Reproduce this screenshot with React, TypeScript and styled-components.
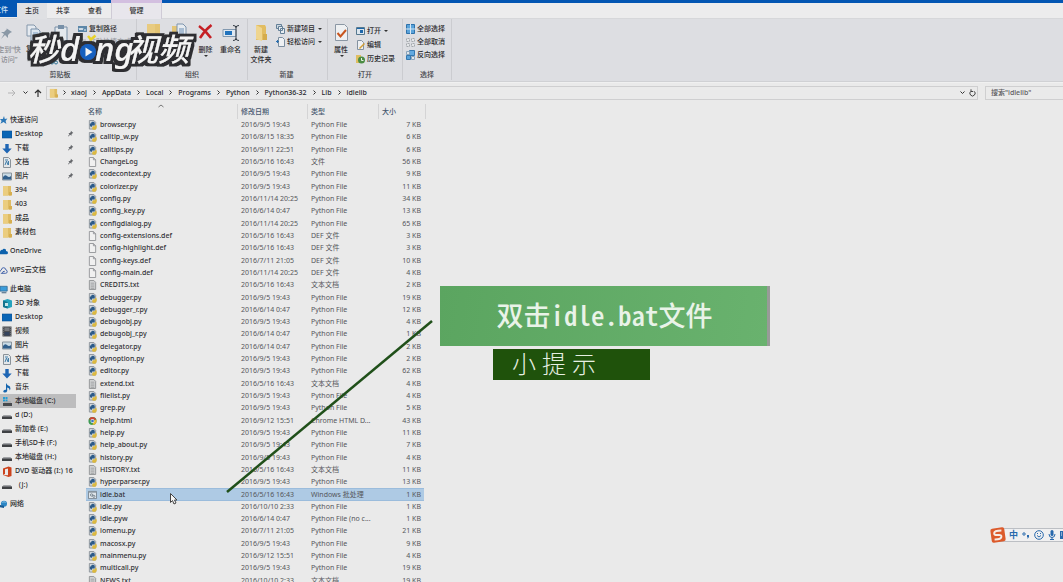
import React from 'react';
import styled, { createGlobalStyle, css } from 'styled-components';

const Global = createGlobalStyle`
  * { box-sizing: border-box; }
  html, body { margin: 0; height: 100%; overflow: hidden; }
  body {
    background: #eaeaea;
    color: #2c2c2e;
    font: 500 7px/12px "Noto Sans", "Noto Sans CJK SC", sans-serif;
  }
  button, input { font: inherit; color: inherit; border: 0; background: none; padding: 0; margin: 0; }
  svg { display: block; flex: none; }
`;

const Window = styled.div`
  position: relative;
  display: flex;
  flex-direction: column;
  height: 100vh;
  overflow: hidden;
`;

/* ---------- title strip and tabs ---------- */
const TitleStrip = styled.div`
  height: 3px;
  flex: none;
  background: #0356b3;
  padding-left: 111px;
`;
const ContextStrip = styled.div`
  width: 51px;
  height: 3px;
  background: #d3bfe0;
`;
const Tabs = styled.nav`
  display: flex;
  height: 16px;
  flex: none;
  background: #ececed;
  border-bottom: 1px solid #d6d7da;
`;
const Tab = styled.button<{ $kind?: 'file' | 'active' | 'context'; $w: number }>`
  width: ${p => p.$w}px;
  height: 16px;
  flex: none;
  text-align: center;
  white-space: nowrap;
  ${p => p.$kind === 'file' && css`
    display: flex;
    justify-content: flex-end;
    align-items: center;
    height: 14px;
    padding-right: 9px;
    background: #0356b3;
    color: #d5e4f5;
  `}
  ${p => p.$kind === 'active' && css`background: #dfe0e3;`}
  ${p => p.$kind === 'context' && css`background: #e8e6ec; border: solid #cfcbd6; border-width: 0 1px;`}
`;

/* ---------- ribbon ---------- */
const Ribbon = styled.div`
  display: flex;
  height: 63px;
  flex: none;
  background: #dddee2;
  border-bottom: 1px solid #d0d1d4;
`;
const Group = styled.section<{ $w: number }>`
  display: flex;
  flex-direction: column;
  justify-content: space-between;
  width: ${p => p.$w}px;
  flex: none;
  margin-bottom: 1px;
  border-right: 1px solid #cbccd0;
`;
const GroupBody = styled.div<{ $pad?: number }>`
  display: flex;
  align-items: flex-start;
  padding: 4px 0 0 ${p => p.$pad ?? 0}px;
`;
const GroupName = styled.div<{ $shift?: number }>`
  text-align: center;
  height: 10px;
  line-height: 10px;
  padding-right: ${p => p.$shift ?? 0}px;
  color: #45464a;
`;
const BigButton = styled.button<{ $w: number; $dim?: boolean }>`
  display: flex;
  flex-direction: column;
  align-items: center;
  width: ${p => p.$w}px;
  flex: none;
  line-height: 10px;
  white-space: nowrap;
  color: ${p => (p.$dim ? '#8d8f94' : 'inherit')};
  svg { margin-bottom: 2px; }
`;
const Stack = styled.div<{ $gap: number; $pad?: number; $top?: number }>`
  display: flex;
  flex-direction: column;
  gap: ${p => p.$gap}px;
  padding: ${p => p.$top ?? 0}px 0 0 ${p => p.$pad ?? 0}px;
`;
const SmallButton = styled.button<{ $dim?: boolean }>`
  display: flex;
  align-items: center;
  gap: 2px;
  height: 12px;
  white-space: nowrap;
  color: ${p => (p.$dim ? '#9b9da2' : 'inherit')};
`;
const Drop = styled.i`
  border: 2px solid transparent;
  border-top-color: #333;
  border-bottom: 0;
  margin-left: 1px;
`;

/* ---------- address row ---------- */
const AddressRow = styled.div`
  display: flex;
  align-items: center;
  flex: none;
  gap: 7px;
  height: 22px;
  padding-bottom: 2px;
  border-top: 1px solid #f0f0f0;
`;
const NavArrows = styled.div`
  display: flex;
  align-items: center;
  justify-content: space-between;
  width: 42px;
  padding-left: 8px;
  margin-right: -3px;
  button { display: flex; }
`;
const AddressBox = styled.div`
  display: flex;
  align-items: center;
  flex: 1;
  height: 14px;
  border: 1px solid #cfcfd0;
  padding-left: 2px;
`;
const Crumb = styled.a`
  color: #26262a;
  text-decoration: none;
`;
const Chevron = styled.span`
  display: flex;
  justify-content: center;
  width: 15px;
  &:nth-of-type(1) { width: 13px; }
`;
const Spacer = styled.div`flex: 1;`;
const Refresh = styled.button`
  display: flex;
  align-items: center;
  justify-content: center;
  width: 10px;
  height: 12px;
`;
const Search = styled.input`
  width: 78px;
  height: 14px;
  border: 1px solid #cfcfd0;
  border-right: 0;
  padding-left: 5px;
  &::placeholder { color: #5b5b5e; opacity: 1; }
`;

/* ---------- body ---------- */
const Body = styled.div`
  display: flex;
  flex: 1;
  min-height: 0;
`;
const Sidebar = styled.aside`
  width: 76px;
  flex: none;
  padding-top: 9px;
  overflow: hidden;
`;
const SideGroup = styled.div`margin-bottom: 5px;`;
const SideItem = styled.a<{ $root?: boolean; $on?: boolean }>`
  display: flex;
  align-items: center;
  gap: ${p => (p.$root ? 2 : 3)}px;
  height: 14px;
  padding: 0 2px 0 ${p => (p.$root ? 0 : 2)}px;
  color: inherit;
  text-decoration: none;
  white-space: nowrap;
  background: ${p => (p.$on ? '#bdbdbe' : 'transparent')};
`;
const Label = styled.span`flex: 1;`;

const Files = styled.main`
  flex: 1;
  padding-left: 10px;
  overflow: hidden;
`;
const Table = styled.table`
  width: 340px;
  height: 483px;
  table-layout: fixed;
  border-collapse: separate;
  border-spacing: 0;
  td, th { padding: 0; white-space: nowrap; overflow: hidden; text-align: left; }
  td { font-weight: 400; color: #55565a; padding-left: 3px; }
  td:first-child { font-weight: 500; color: #303034; padding-left: 2px; }
  td:last-child { text-align: right; padding-right: 5px; }
`;
const Head = styled.th`
  position: relative;
  height: 15px;
  font-weight: 500;
  color: #47586f;
  border-right: 1px solid #d4d4d5;
  && { padding-left: 3px; }
  &&:first-child { padding-left: 2px; }
`;
const SortMark = styled.svg`
  position: absolute;
  top: 0;
  left: 72px;
`;
const Row = styled.tr<{ $on?: boolean }>`
  height: 12px;
  line-height: 12px;
  ${p => p.$on && css`
    td { background: #aecae4; box-shadow: inset 0 1px #9bbcdc, inset 0 -1px #9bbcdc; }
    td:last-child { border-right: 2px solid #eaeaea; padding-right: 3px; }
  `}
`;
const NameCell = styled.span`
  display: flex;
  align-items: center;
  gap: 3px;
  height: 12px;
`;

/* ---------- things lying over the window ---------- */
const Overlay = styled.svg`
  position: absolute;
  top: 0;
  left: 0;
  pointer-events: none;
`;
const Callout = styled.div`
  position: absolute;
  left: 440px;
  top: 286px;
  width: 330px;
  height: 60px;
  padding-left: 2px;
  text-align: center;
  background: linear-gradient(100deg, #5ba560, #69b26e);
  border-right: 3px solid #989b98;
  color: #e9f3e8;
  font: 500 27px/58px "Noto Sans CJK SC", sans-serif;
  font-feature-settings: "hwid";
`;
const Tip = styled.div`
  position: absolute;
  left: 493px;
  top: 349px;
  width: 157px;
  height: 31px;
  padding-left: 19px;
  background: #1f520b;
  color: #e6efe2;
  font: 300 24px/33px "Liberation Serif", "Noto Sans CJK SC", serif;
`;
const ImeBar = styled.div`
  position: absolute;
  right: 0;
  top: 528px;
  display: flex;
  align-items: center;
  width: 65px;
  height: 14px;
  gap: 4px;
  padding-left: 11px;
  background: #f0f0f1;
  border: solid #bcbfc4;
  border-width: 1px 0;
  color: #2869ad;
  font-weight: 700;
  font-size: 9px;
`;
const ImeLogo = styled.svg`
  position: absolute;
  left: -9px;
  top: -3px;
`;

/* ---------- icons ---------- */
type IconName =
  | 'py' | 'file' | 'txt' | 'chrome' | 'bat' | 'folder' | 'star' | 'desktop' | 'down' | 'doc' | 'pic'
  | 'cloud' | 'wps' | 'pc' | 'cube' | 'video' | 'music' | 'sysdrive' | 'drive' | 'office' | 'net' | 'pin';

const shapes: Record<IconName, React.ReactNode> = {
  py: <><path d="M1.500 .5h5l2 2v7.500h-7z" fill="#cfd5da" stroke="#8b9298" /><path d="M3.500 3.500q0-1.500 2-1.500t2 1.500v2.500h-3v1.500h-1.500q-1-1-1-2.500t1.500-1.500z" fill="#2c5a88" /><path d="M5.500 7h2.500V5q1.800 0 1.800 2.500T8.500 10v.7H6q-1.500 0-1.500-1.500z" fill="#dcb93f" /></>,
  file: <path d="M1.500 .5h4.500l2.500 2.500v7.500h-7z M6 .5v2.500h2.500" fill="#f0f0f0" stroke="#929497" />,
  txt: <><path d="M1.500 .5h5l2 2v8h-7z" fill="#d0d2d3" stroke="#909294" /><path d="M3 3.500h4M3 5.500h4M3 7.500h4M3 9.300h4" stroke="#8b8e91" strokeWidth=".7" /></>,
  chrome: <><circle cx="5" cy="5.500" r="4.500" fill="#3d9a52" /><path d="M1 3.500A4.500 4.500 0 0 1 9.200 3.700L5 5z" fill="#cf4436" /><path d="M9.200 3.700A4.500 4.500 0 0 1 5 10L6 5.500z" fill="#e9bd32" /><circle cx="5" cy="5.500" r="2.200" fill="#e9eef4" /><circle cx="5" cy="5.500" r="1.500" fill="#3a75c4" /></>,
  bat: <><path d="M.5 1.500h9v8h-9z" fill="#dfe5ea" stroke="#75818c" /><path d="M1 2.500h8" stroke="#8e9aa5" /><circle cx="4" cy="5.500" r="1.300" fill="none" stroke="#73808b" /><circle cx="6.500" cy="7" r="1.200" fill="none" stroke="#73808b" /></>,
  folder: <><path d="M1 1h8v9.500H1z" fill="#dfbc63" /><path d="M1 1h5v9.500H1z" fill="#ebcd7f" /><path d="M7 7h3v3.500H7z" fill="#d6ae50" /></>,
  star: <path d="M5 0l1 3.500 3.200-.5-2.200 3L8 10 4.500 7.500.5 9.500 2 6 0 3.500h3.500z" fill="#2c78b8" />,
  desktop: <path d="M0 2h10v7H0z" fill="#0a65b5" stroke="#0a4f92" strokeWidth=".6" />,
  down: <path d="M3.300 1h3.400v4.500h3L5 10.500.3 5.500h3z" fill="#1f66b4" />,
  doc: <><path d="M1.500 .5h5l2 2v8h-7z" fill="#e3e7ea" stroke="#8a9299" /><path d="M3 8l1.500-4L6 8M3 3h3M6.500 4v4" stroke="#4480ab" fill="none" /></>,
  pic: <><path d="M.5 2h9v7h-9z" fill="#c9dae5" stroke="#88939c" /><path d="M1 6q2-3 4-1t4 0v3.500H1z" fill="#315f8c" /></>,
  cloud: <path d="M0 9V5.500Q1 3 3 3.500 4 1 6.500 2.500 8 3 7.500 5q2.500 0 2.500 2t-2 2z" fill="#0d62ad" />,
  wps: <path d="M1 9h6q2 0 2-2T7.500 5Q7 2 4.500 2T1.500 5Q0 5.500 0 7M3 9q0-3 3-2.500" fill="none" stroke="#4060a8" strokeWidth="1.200" />,
  pc: <><path d="M0 1.500h9v6H0z" fill="#3b9cda" stroke="#356a94" /><path d="M2 9.500h6" stroke="#5c7890" strokeWidth="1.500" /></>,
  cube: <><path d="M1 2.500L5.500 1 10 2.500v6.500L5.500 10.500 1 9z" fill="#26a3bd" /><path d="M5.500 4v6.500L1 9V2.500z" fill="#13748e" /><path d="M3 5h3v3H3z" fill="#c6e7ec" /></>,
  video: <><path d="M.5 .5h9v10h-9z" fill="#4a4c51" /><path d="M2.500 1.500h5v3.500h-5z" fill="#77797e" /><path d="M2.500 6h5v3.500h-5z" fill="#34435d" /><path d="M1.300 1v9M8.700 1v9" stroke="#8d8f93" strokeDasharray="1 1" strokeWidth=".7" /></>,
  music: <path d="M4 1q1 2.500 4 3.500 1 2-.5 4 .3-2.500-2.300-3V9Q4.500 10.800 2.500 10.500t-.8-2Q2.300 7.500 4 7.800z" fill="#1665ae" />,
  sysdrive: <><path d="M1 1h2v2H1zM3.500 1h2v2h-2zM1 3.500h2v2H1zM3.500 3.500h2v2h-2z" fill="#239dd6" /><path d="M1 7h9v3H1z" fill="#474a4e" /><path d="M2 6h7" stroke="#9b9ea1" /></>,
  drive: <><path d="M1.500 5h7l1.500 2H0z" fill="#a2a4a7" /><path d="M0 6.500h10v2.500H0z" fill="#3f4144" /></>,
  office: <path d="M1 2.500L6.500 .5 9.500 1.500v8.500L6.500 11 1 9l5 .3V2.500L3 3.300V8L1 9z" fill="#cc431d" />,
  net: <><circle cx="5" cy="4.500" r="3.800" fill="#2b86c5" /><path d="M0 6l5 1v3L0 9z" fill="#165992" /><path d="M3 3q2-2 4 0" stroke="#a5d2ec" fill="none" /></>,
  pin: <path d="M5.500 1l3.500 3-1 .5-1.500 1.500v2L4.500 6.500 2 9l-.5-.5 2-2.700L2 4h2L5.500 2.500z" fill="#66686c" />,
};

const Icon = ({ name, size = 10 }: { name: IconName; size?: number }) => (
  <svg width={size} height={size + 1} viewBox="0 0 10 11" aria-hidden="true">{shapes[name]}</svg>
);

const FolderBig = ({ pages }: { pages?: boolean }) => (
  <svg width="17" height="19" viewBox="0 0 17 19">
    {pages ? (
      <><path d="M1 3h10v13H1z" fill="#e3c578" /><path d="M6 1h6l3 3v10H6z" fill="#e6ebf0" stroke="#7c94ad" /><path d="M8 6h5M8 8h5M8 10h5" stroke="#6b8fb6" /></>
    ) : (
      <><path d="M2 1h13v15H2z" fill="#e4c473" /><path d="M2 1h8v15H2z" fill="#e8cb80" /></>
    )}
  </svg>
);

const ChevronIcon = ({ down }: { down?: boolean }) => (
  <svg width="5" height="5" viewBox="0 0 5 5" fill="none" stroke="#333" strokeWidth="1">
    <path d={down ? 'M.5 1.500l2 2 2-2' : 'M1.500 .5l2 2-2 2'} />
  </svg>
);

/* ---------- data ---------- */
const PY = 'Python File';
const DEF = 'DEF 文件';
const TXT = '文本文档';
const files: [IconName, string, string, string, number][] = [
  ['py', 'browser.py', '2016/9/5 19:43', PY, 7],
  ['py', 'calltip_w.py', '2016/8/15 18:35', PY, 6],
  ['py', 'calltips.py', '2016/9/11 22:51', PY, 6],
  ['file', 'ChangeLog', '2016/5/16 16:43', '文件', 56],
  ['py', 'codecontext.py', '2016/9/5 19:43', PY, 9],
  ['py', 'colorizer.py', '2016/9/5 19:43', PY, 11],
  ['py', 'config.py', '2016/11/14 20:25', PY, 34],
  ['py', 'config_key.py', '2016/6/14 0:47', PY, 13],
  ['py', 'configdialog.py', '2016/11/14 20:25', PY, 65],
  ['file', 'config-extensions.def', '2016/5/16 16:43', DEF, 3],
  ['file', 'config-highlight.def', '2016/5/16 16:43', DEF, 3],
  ['file', 'config-keys.def', '2016/7/11 21:05', DEF, 10],
  ['file', 'config-main.def', '2016/11/14 20:25', DEF, 4],
  ['txt', 'CREDITS.txt', '2016/5/16 16:43', TXT, 2],
  ['py', 'debugger.py', '2016/9/5 19:43', PY, 19],
  ['py', 'debugger_r.py', '2016/6/14 0:47', PY, 12],
  ['py', 'debugobj.py', '2016/9/5 19:43', PY, 4],
  ['py', 'debugobj_r.py', '2016/6/14 0:47', PY, 1],
  ['py', 'delegator.py', '2016/6/14 0:47', PY, 2],
  ['py', 'dynoption.py', '2016/9/5 19:43', PY, 2],
  ['py', 'editor.py', '2016/9/5 19:43', PY, 62],
  ['txt', 'extend.txt', '2016/5/16 16:43', TXT, 4],
  ['py', 'filelist.py', '2016/9/5 19:43', PY, 4],
  ['py', 'grep.py', '2016/9/5 19:43', PY, 5],
  ['chrome', 'help.html', '2016/9/12 15:51', 'Chrome HTML D...', 43],
  ['py', 'help.py', '2016/9/5 19:43', PY, 11],
  ['py', 'help_about.py', '2016/9/5 19:43', PY, 7],
  ['py', 'history.py', '2016/9/5 19:43', PY, 4],
  ['txt', 'HISTORY.txt', '2016/5/16 16:43', TXT, 11],
  ['py', 'hyperparser.py', '2016/9/5 19:43', PY, 13],
  ['bat', 'idle.bat', '2016/5/16 16:43', 'Windows 批处理', 1],
  ['py', 'idle.py', '2016/10/10 2:33', PY, 1],
  ['py', 'idle.pyw', '2016/6/14 0:47', 'Python File (no c...', 1],
  ['py', 'iomenu.py', '2016/7/11 21:05', PY, 21],
  ['py', 'macosx.py', '2016/9/5 19:43', PY, 9],
  ['py', 'mainmenu.py', '2016/9/12 15:51', PY, 4],
  ['py', 'multicall.py', '2016/9/5 19:43', PY, 19],
  ['txt', 'NEWS.txt', '2016/10/10 2:33', TXT, 19],
];

type Side = { icon: IconName; text: string; root?: boolean; pin?: boolean; on?: boolean };
const sidebar: Side[][] = [
  [
    { icon: 'star', text: '快速访问', root: true },
    { icon: 'desktop', text: 'Desktop', pin: true },
    { icon: 'down', text: '下载', pin: true },
    { icon: 'doc', text: '文档', pin: true },
    { icon: 'pic', text: '图片', pin: true },
    { icon: 'folder', text: '394' },
    { icon: 'folder', text: '403' },
    { icon: 'folder', text: '成品' },
    { icon: 'folder', text: '素材包' },
  ],
  [{ icon: 'cloud', text: 'OneDrive', root: true }],
  [{ icon: 'wps', text: 'WPS云文档', root: true }],
  [
    { icon: 'pc', text: '此电脑', root: true },
    { icon: 'cube', text: '3D 对象' },
    { icon: 'desktop', text: 'Desktop' },
    { icon: 'video', text: '视频' },
    { icon: 'pic', text: '图片' },
    { icon: 'doc', text: '文档' },
    { icon: 'down', text: '下载' },
    { icon: 'music', text: '音乐' },
    { icon: 'sysdrive', text: '本地磁盘 (C:)', on: true },
    { icon: 'drive', text: 'd (D:)' },
    { icon: 'drive', text: '新加卷 (E:)' },
    { icon: 'drive', text: '手机SD卡 (F:)' },
    { icon: 'drive', text: '本地磁盘 (H:)' },
    { icon: 'office', text: 'DVD 驱动器 (I:) 16' },
    { icon: 'drive', text: '\u00a0\u00a0(J:)' },
  ],
  [{ icon: 'net', text: '网络', root: true }],
];

const crumbs = ['xiaoj', 'AppData', 'Local', 'Programs', 'Python', 'Python36-32', 'Lib', 'idlelib'];

/* ---------- parts ---------- */
const RibbonBar = () => (
  <Ribbon>
    <Group $w={137}>
      <GroupBody>
        <BigButton $w={18} $dim>
          <svg width="16" height="20" viewBox="0 0 16 20"><path d="M5 5l6 4-2 1-2 2v3l-3-3-4 4 3-5-3-2h3l3-3z" fill="#8a98a6" /></svg>
          定到“快<br />访问”
        </BigButton>
        <BigButton $w={30}>
          <svg width="17" height="19" viewBox="0 0 17 19"><path d="M2 2h7l2 2v9H2z" fill="#e5eaf0" stroke="#8497ab" /><path d="M6 6h7l2 2v10H6z" fill="#dbe5ef" stroke="#7990a9" /><path d="M8 10h5M8 12h5M8 14h5" stroke="#7b9dc0" /></svg>
          复制
        </BigButton>
        <Stack $gap={10}>
          <BigButton $w={24} aria-label="粘贴">
            <svg width="17" height="19" viewBox="0 0 17 19"><path d="M3 4h12v14H3z" fill="#e4e9ee" stroke="#7890a8" /><path d="M6 2h6v4H6z" fill="#7890a8" /></svg>
          </BigButton>
          <SmallButton>
            <svg width="10" height="9" viewBox="0 0 10 9" fill="none" stroke="#2f7396"><path d="M4 5L8 0M7 5L4 0" stroke="#5c6670" /><circle cx="4" cy="6.500" r="1.500" /><circle cx="8" cy="6.500" r="1.500" /></svg>
            剪切
          </SmallButton>
        </Stack>
        <Stack $gap={1} $pad={4}>
          <SmallButton>
            <svg width="9" height="8" viewBox="0 0 9 8"><path d="M0 1h9v6H0z" fill="#5c87a9" /><path d="M1 3l1 2 1-2 1 2 1-2M6 5h2" stroke="#e8f0f5" fill="none" /></svg>
            复制路径
          </SmallButton>
          <SmallButton $dim>
            <svg width="9" height="8" viewBox="0 0 9 8"><path d="M1 1h7v6H1z" fill="#c3c7cc" /></svg>
            粘贴快捷方式
          </SmallButton>
        </Stack>
      </GroupBody>
      <GroupName $shift={16}>剪贴板</GroupName>
    </Group>
    <Group $w={111}>
      <GroupBody $pad={4}>
        <BigButton $w={24} aria-label="移动到"><FolderBig /></BigButton>
        <BigButton $w={28} aria-label="复制到"><FolderBig pages /></BigButton>
        <BigButton $w={25}>
          <svg width="17" height="20" viewBox="0 0 17 20"><path d="M2 3q7 5 12 12M14.500 2Q8 7 3 15" fill="none" stroke="#c51f24" strokeWidth="2.500" /></svg>
          删除<Drop />
        </BigButton>
        <BigButton $w={25}>
          <svg width="18" height="20" viewBox="0 0 18 20"><path d="M1 6.500h13v7H1z" fill="#dfe8f1" stroke="#8299b0" /><path d="M3 8h7v4H3z" fill="#2173bd" /><path d="M14 3v14M11 2.500q3 0 3 2 0-2 3-2M11 17.500q3 0 3-2 0 2 3 2" fill="none" stroke="#333b44" /></svg>
          重命名
        </BigButton>
      </GroupBody>
      <GroupName>组织</GroupName>
    </Group>
    <Group $w={80}>
      <GroupBody $pad={1}>
        <BigButton $w={24}>
          <svg width="17" height="20" viewBox="0 0 17 20"><path d="M3 2h9l1 2v13H3z" fill="#e2bd62" /><path d="M3 2l6 3v13l-6-2z" fill="#efd58f" /><path d="M10 11h4v6h-4z" fill="#d5ac4d" /></svg>
          新建<br />文件夹
        </BigButton>
        <Stack $gap={1} $pad={3}>
          <SmallButton>
            <svg width="9" height="10" viewBox="0 0 9 10"><path d="M.5 .5h5v4h-5z" fill="#cfd9e2" stroke="#637f97" /><path d="M2.500 2.500h4v4h-4zM4.500 4.500h4v5h-4z" fill="#e7ecf0" stroke="#637f97" /></svg>
            新建项目<Drop />
          </SmallButton>
          <SmallButton>
            <svg width="9" height="10" viewBox="0 0 9 10"><path d="M2.500 .5h4l2 2v7h-6z" fill="#eef1f4" stroke="#7b8ea0" /><path d="M0 4.500h3M1.500 3v3" stroke="#2c6fae" /></svg>
            轻松访问<Drop />
          </SmallButton>
        </Stack>
      </GroupBody>
      <GroupName $shift={2}>新建</GroupName>
    </Group>
    <Group $w={75}>
      <GroupBody $pad={1}>
        <BigButton $w={24}>
          <svg width="15" height="20" viewBox="0 0 15 20"><path d="M1.500 1.500h9l3 3v13h-12z" fill="#eef0f2" stroke="#8b97a4" /><path d="M3.500 10l3 3.500L12 7" fill="none" stroke="#c8551e" strokeWidth="2" /></svg>
          属性<Drop />
        </BigButton>
        <Stack $gap={2} $pad={3} $top={2}>
          <SmallButton>
            <svg width="9" height="8" viewBox="0 0 9 8"><path d="M.5 .5h8v7h-8z" fill="#dce6ee" stroke="#56788f" /><path d="M1 1h7v1H1zM4 3h3v3H4z" fill="#1c66aa" /></svg>
            打开<Drop />
          </SmallButton>
          <SmallButton>
            <svg width="9" height="10" viewBox="0 0 9 10"><path d="M1.500 .5h4l2 2v7h-6z" fill="#eef0f3" stroke="#8492a0" /><path d="M3 8l5-5 1 1-5 5z" fill="#d29e35" /></svg>
            编辑
          </SmallButton>
          <SmallButton>
            <svg width="9" height="10" viewBox="0 0 9 10"><path d="M0 1h5v8H0z" fill="#dfbe61" /><circle cx="5.500" cy="6" r="3.500" fill="#4b8c43" /><path d="M5.500 4v2.500h2" stroke="#e8f1e7" fill="none" /></svg>
            历史记录
          </SmallButton>
        </Stack>
      </GroupBody>
      <GroupName>打开</GroupName>
    </Group>
    <Group $w={49}>
      <GroupBody $pad={3}>
        <Stack $gap={1}>
          <SmallButton>
            <svg width="9" height="10" viewBox="0 0 9 10"><path d="M.5 .5h8v9h-8z" fill="#5aa3da" stroke="#2f72ab" /><path d="M4.500 0v10M0 5h9" stroke="#d8e8f4" /></svg>
            全部选择
          </SmallButton>
          <SmallButton>
            <svg width="9" height="10" viewBox="0 0 9 10"><path d="M.5 1.500h3v3h-3zM5.500 1.500h3v3h-3zM.5 6.500h3v3h-3zM5.500 6.500h3v3h-3z" fill="#e4e6e8" stroke="#a5a9ad" strokeDasharray="1 .5" /></svg>
            全部取消
          </SmallButton>
          <SmallButton>
            <svg width="9" height="10" viewBox="0 0 9 10"><path d="M3.500 .5h5v5h-5z" fill="#62a9df" stroke="#3478b0" /><path d="M.5 5.500h4v4h-4z" fill="#5aa3da" stroke="#3478b0" /><path d="M.5 1.500h3v3h-3zM5.500 6.500h3v3h-3z" fill="#dfe6ec" stroke="#8aa4ba" /></svg>
            反向选择
          </SmallButton>
        </Stack>
      </GroupBody>
      <GroupName>选择</GroupName>
    </Group>
  </Ribbon>
);

const AddressBar = () => (
  <AddressRow>
    <NavArrows>
      <button aria-label="前进"><svg width="8" height="8" viewBox="0 0 8 8" fill="none" stroke="#b4b4b5"><path d="M0 4h7M4 1l3 3-3 3" /></svg></button>
      <button aria-label="最近"><ChevronIcon down /></button>
      <button aria-label="向上"><svg width="8" height="8" viewBox="0 0 8 8" fill="none" stroke="#333" strokeWidth="1.200"><path d="M4 8V1M1 4l3-3 3 3" /></svg></button>
    </NavArrows>
    <AddressBox>
      <Icon name="folder" size={9} />
      {crumbs.map(c => (
        <React.Fragment key={c}>
          <Chevron><ChevronIcon /></Chevron>
          <Crumb href="#">{c}</Crumb>
        </React.Fragment>
      ))}
      <Spacer />
      <Refresh aria-label="展开"><ChevronIcon down /></Refresh>
      <Refresh aria-label="刷新">
        <svg width="7" height="8" viewBox="0 0 7 8" fill="none" stroke="#444"><path d="M2 2.200A2.600 2.600 0 1 0 5 2.200M2 .3v2.200h2" /></svg>
      </Refresh>
    </AddressBox>
    <Search aria-label="搜索" placeholder={'搜索"idlelib"'} />
  </AddressRow>
);

const FileTable = () => (
  <Table>
    <colgroup>
      <col style={{ width: 152 }} />
      <col style={{ width: 70 }} />
      <col style={{ width: 71 }} />
      <col />
    </colgroup>
    <thead>
      <tr>
        <Head>
          名称
          <SortMark width="6" height="4" viewBox="0 0 6 4" fill="none" stroke="#777"><path d="M.5 3l2.500-2 2.500 2" /></SortMark>
        </Head>
        <Head>修改日期</Head>
        <Head>类型</Head>
        <Head>大小</Head>
      </tr>
    </thead>
    <tbody>
      {files.map(([icon, name, date, type, kb]) => (
        <Row key={name} $on={name === 'idle.bat'}>
          <td><NameCell><Icon name={icon} size={9} />{name}</NameCell></td>
          <td>{date}</td>
          <td>{type}</td>
          <td>{kb} KB</td>
        </Row>
      ))}
    </tbody>
  </Table>
);

const LogoText = styled.g`
  font: italic 500 31px "Noto Sans CJK SC", sans-serif;
  fill: #f4f4f4;
  .latin { font: italic 500 33px "Noto Sans", sans-serif; }
`;

const Watermark = () => (
  <Overlay width="210" height="80" viewBox="0 0 210 80">
    <defs>
      <filter id="outline" x="-10%" y="-20%" width="120%" height="140%">
        <feMorphology in="SourceAlpha" operator="dilate" radius="3" result="wide" />
        <feFlood floodColor="#2d2e30" />
        <feComposite in2="wide" operator="in" result="edge" />
        <feMerge><feMergeNode in="edge" /><feMergeNode in="SourceGraphic" /></feMerge>
      </filter>
    </defs>
    <g filter="url(#outline)">
      <LogoText>
        <text x="28" y="61">秒</text>
        <text className="latin" x="60" y="61">d</text>
        <text className="latin" x="95" y="61">ng</text>
        <text x="127" y="61">视频</text>
      </LogoText>
      <circle cx="88" cy="52" r="8" fill="#1861bf" />
    </g>
    <path d="M85.500 47.500l7 4.500-7 4.500z" fill="#f4f4f4" />
    <path d="M88 36l3 3.500 4.500-4" fill="none" stroke="#e8d22b" strokeWidth="2.500" />
  </Overlay>
);

export default function App() {
  return (
    <>
      <Global />
      <Window>
        <TitleStrip><ContextStrip /></TitleStrip>
        <Tabs>
          <Tab $kind="file" $w={17}>文件</Tab>
          <Tab $kind="active" $w={30}>主页</Tab>
          <Tab $w={32}>共享</Tab>
          <Tab $w={32}>查看</Tab>
          <Tab $kind="context" $w={51}>管理</Tab>
        </Tabs>
        <RibbonBar />
        <AddressBar />
        <Body>
          <Sidebar>
            {sidebar.map((group, i) => (
              <SideGroup key={i}>
                {group.map(s => (
                  <SideItem key={s.text} href="#" $root={s.root} $on={s.on}>
                    <Icon name={s.icon} size={s.root ? 8 : 10} />
                    <Label>{s.text}</Label>
                    {s.pin && <Icon name="pin" size={7} />}
                  </SideItem>
                ))}
              </SideGroup>
            ))}
          </Sidebar>
          <Files><FileTable /></Files>
        </Body>

        <Watermark />
        <Overlay width="440" height="520" viewBox="0 0 440 520">
          <path d="M227 492L432 321" stroke="#20501a" strokeWidth="2.500" />
          <path d="M170.500 493.500v9l2-2 1.500 3.500 2-1-1.500-3h2.500z" fill="#f5f5f5" stroke="#444" />
        </Overlay>
        <Callout>双击idle.bat文件</Callout>
        <Tip>小 提 示</Tip>
        <ImeBar>
          <ImeLogo width="18" height="18" viewBox="0 0 18 18">
            <g transform="rotate(-8 9 9)">
              <rect x="2" y="2" width="14" height="14" rx="2" fill="#dc5a2b" />
              <path d="M13 5Q6 4 5.500 6.500T9 9t3 2.500-7 1.500" fill="none" stroke="#f6ebe6" strokeWidth="2" />
            </g>
          </ImeLogo>
          <span>中</span>
          <svg width="8" height="8" viewBox="0 0 8 8"><circle cx="2" cy="3" r="1.200" fill="none" stroke="#2869ad" /><path d="M5 4h2v2l-1.500 2V6H5z" fill="#2869ad" /></svg>
          <svg width="10" height="10" viewBox="0 0 10 10" fill="none" stroke="#2869ad"><circle cx="5" cy="5" r="4.300" /><path d="M3 5.500q2 3 4 0M3.500 3v1M6.500 3v1" /></svg>
          <svg width="8" height="10" viewBox="0 0 8 10"><rect x="2.500" width="3" height="6" rx="1.500" fill="#2869ad" /><path d="M1 4q0 3.500 3 3.500T7 4M4 7v3M2 9.500h4" stroke="#2869ad" fill="none" /></svg>
          <svg width="8" height="8" viewBox="0 0 8 8"><path d="M0 0h8v8H0z" fill="#2869ad" /><path d="M1 2h6M1 4h6" stroke="#f0f0f1" strokeDasharray="1 1" /></svg>
        </ImeBar>
      </Window>
    </>
  );
}
